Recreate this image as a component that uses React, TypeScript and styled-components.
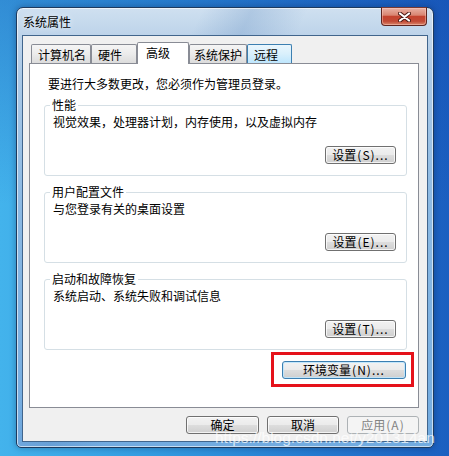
import React from "react";
import styled, { createGlobalStyle, css } from "styled-components";

const GlobalStyle = createGlobalStyle`
  html, body { margin: 0; padding: 0; }
  body {
    width: 449px;
    height: 456px;
    overflow: hidden;
    font-family: "Noto Sans CJK SC", "Noto Sans", sans-serif;
    -webkit-font-smoothing: antialiased;
  }
`;

const Desktop = styled.div`
  position: relative;
  width: 449px;
  height: 456px;
  box-sizing: border-box;
  padding: 7px 15px 0 16px;
  background:
    linear-gradient(180deg, rgba(18, 70, 170, 0.35) 0%, rgba(18, 70, 170, 0) 45%),
    linear-gradient(90deg, #43b3ec 0%, #329ae0 35%, #2478cf 72%, #1b5fc0 100%);
`;

const Window = styled.div`
  width: 418px;
  height: 441px;
  box-sizing: border-box;
  display: flex;
  flex-direction: column;
  padding: 0 5px 5px;
  border: 1px solid #1d3a5e;
  border-radius: 7px 7px 5px 5px;
  background:
    linear-gradient(115deg, rgba(255,255,255,0) 30%, rgba(70,120,180,0.22) 38%, rgba(255,255,255,0) 47%),
    linear-gradient(180deg, #cfe0f0 0px, #bed4ea 26px, #a9c8e6 70px, #8bb9e3 200px, #72abe0 100%);
  box-shadow: inset 0 0 0 1px rgba(255, 255, 255, 0.6), 0 0 6px rgba(0, 20, 60, 0.35);
`;

const TitleBar = styled.div`
  height: 27px;
  display: flex;
  align-items: center;
  justify-content: space-between;
  padding-left: 1px;
`;

const Title = styled.span`
  font-size: 12px;
  line-height: 16px;
  color: #000;
  text-shadow: 0 0 6px rgba(255, 255, 255, 0.9);
`;

const CloseButton = styled.div`
  align-self: flex-start;
  margin-top: -1px;
  margin-right: 1px;
  width: 46px;
  height: 19px;
  box-sizing: border-box;
  display: flex;
  align-items: center;
  justify-content: center;
  border: 1px solid #5e2520;
  border-top-color: #7a3a32;
  border-radius: 0 0 4px 4px;
  background: linear-gradient(180deg, #e9b1a4 0%, #d98572 42%, #c4432f 50%, #c24a36 78%, #d9876c 100%);
  box-shadow: inset 0 0 0 1px rgba(255, 210, 200, 0.45);
`;

const Client = styled.div`
  flex: 1;
  display: flex;
  flex-direction: column;
  box-sizing: border-box;
  padding: 6px 0 7px;
  background: #f0f0f0;
  border: 1px solid #41658c;
`;

const TabRow = styled.div`
  display: flex;
  align-items: flex-end;
  height: 21px;
  padding-left: 8px;
`;

const Tab = styled.div<{ $w: number; $pad: number; $active?: boolean; $hover?: boolean }>`
  position: relative;
  box-sizing: border-box;
  width: ${(p) => p.$w}px;
  height: ${(p) => (p.$active ? 22 : 19)}px;
  margin-bottom: ${(p) => (p.$active ? -1 : 0)}px;
  z-index: ${(p) => (p.$active ? 2 : 1)};
  padding: 2px 0 0 ${(p) => p.$pad}px;
  font-size: 12px;
  line-height: 16px;
  color: #000;
  white-space: nowrap;
  border: 1px solid #898c95;
  border-bottom: none;
  border-radius: 2px 2px 0 0;
  background: linear-gradient(180deg, #f5f5f5 0%, #ebebeb 50%, #dcdcdc 100%);
  ${(p) =>
    p.$hover &&
    css`
      border-color: #3c7fb1;
      background: linear-gradient(180deg, #eaf6fd 0%, #d9f0fc 50%, #bee6fd 100%);
    `}
  ${(p) =>
    p.$active &&
    css`
      background: #fff;
    `}
`;

const Panel = styled.div`
  height: 345px;
  box-sizing: border-box;
  margin: 0 8px 0 6px;
  padding: 12px 11px 0 14px;
  display: flex;
  flex-direction: column;
  background: #fff;
  border: 1px solid #898c95;
`;

const Intro = styled.div`
  margin-left: 4px;
  font-size: 12px;
  line-height: 16px;
  color: #000;
`;

const Groups = styled.div`
  display: flex;
  flex-direction: column;
  gap: 16px;
  margin-top: 13px;
`;

const GroupBox = styled.div`
  position: relative;
  height: 71px;
  box-sizing: border-box;
  display: flex;
  flex-direction: column;
  padding: 8px 10px 11px 8px;
  border: 1px solid #d5dfe5;
  border-radius: 3px;
`;

const GroupLabel = styled.span`
  position: absolute;
  top: -9px;
  left: 5px;
  padding: 0 2px;
  background: #fff;
  font-size: 12px;
  line-height: 16px;
  color: #000;
`;

const Desc = styled.div`
  font-size: 12px;
  line-height: 16px;
  color: #000;
`;

const ButtonRow = styled.div`
  display: flex;
  justify-content: flex-end;
  margin-top: 16px;
`;

const Highlight = styled.div`
  align-self: flex-end;
  margin-top: 2px;
  margin-right: -7px;
  padding: 6px 5px 5px 8px;
  border: 3px solid #e5121a;
  display: flex;
`;

const BottomRow = styled.div`
  display: flex;
  justify-content: flex-end;
  gap: 8px;
  margin-top: 8px;
  padding-right: 8px;
`;

const Button = styled.button<{ $w: number; $variant?: "default" | "disabled" }>`
  width: ${(p) => p.$w}px;
  height: 18px;
  box-sizing: border-box;
  padding: 0;
  display: flex;
  align-items: center;
  justify-content: center;
  font-family: "Noto Sans CJK SC", "Noto Sans", sans-serif;
  font-size: 12px;
  line-height: 16px;
  color: #000;
  border: 1px solid #707070;
  border-radius: 3px;
  background: linear-gradient(180deg, #f2f2f2 0%, #ebebeb 48%, #dddddd 52%, #cfcfcf 100%);
  box-shadow: inset 0 0 0 1px rgba(255, 255, 255, 0.75);
  ${(p) =>
    p.$variant === "default" &&
    css`
      border-color: #3c7fb1;
      box-shadow: inset 0 0 0 1px rgba(190, 230, 253, 0.9);
    `}
  ${(p) =>
    p.$variant === "disabled" &&
    css`
      color: #838383;
      border-color: #adb2b5;
      background: #f4f4f4;
      box-shadow: none;
    `}
`;

const Mnemonic = styled.span`
  margin-left: 1px;
  letter-spacing: 1px;
`;

const Watermark = styled.div`
  position: absolute;
  left: 215px;
  top: 429px;
  font-family: "Liberation Sans", Arial, sans-serif;
  font-size: 15.5px;
  line-height: 18px;
  color: rgba(255, 255, 255, 0.72);
  white-space: nowrap;
  pointer-events: none;
`;

const tabs = [
  { label: "计算机名", w: 60, pad: 6 },
  { label: "硬件", w: 46, pad: 6 },
  { label: "高级", w: 52, pad: 8, active: true },
  { label: "系统保护", w: 58, pad: 4 },
  { label: "远程", w: 45, pad: 6, hover: true },
];

const groups = [
  { title: "性能", desc: "视觉效果，处理器计划，内存使用，以及虚拟内存", key: "(S)..." },
  { title: "用户配置文件", desc: "与您登录有关的桌面设置", key: "(E)..." },
  { title: "启动和故障恢复", desc: "系统启动、系统失败和调试信息", key: "(T)..." },
];

export default function App() {
  return (
    <>
      <GlobalStyle />
      <Desktop>
        <Window>
          <TitleBar>
            <Title>系统属性</Title>
            <CloseButton>
              <svg width="13" height="10" viewBox="0 0 13 10">
                <path d="M2 1.5 L11 8.5 M11 1.5 L2 8.5" stroke="#4a1812" strokeWidth="4" strokeLinecap="round" />
                <path d="M2 1.5 L11 8.5 M11 1.5 L2 8.5" stroke="#ffffff" strokeWidth="2.2" strokeLinecap="round" />
              </svg>
            </CloseButton>
          </TitleBar>
          <Client>
            <TabRow>
              {tabs.map((t) => (
                <Tab key={t.label} $w={t.w} $pad={t.pad} $active={t.active} $hover={t.hover}>
                  {t.label}
                </Tab>
              ))}
            </TabRow>
            <Panel>
              <Intro>要进行大多数更改，您必须作为管理员登录。</Intro>
              <Groups>
                {groups.map((g) => (
                  <GroupBox key={g.title}>
                    <GroupLabel>{g.title}</GroupLabel>
                    <Desc>{g.desc}</Desc>
                    <ButtonRow>
                      <Button $w={71}>
                        设置<Mnemonic>{g.key}</Mnemonic>
                      </Button>
                    </ButtonRow>
                  </GroupBox>
                ))}
              </Groups>
              <Highlight>
                <Button $w={124} $variant="default">
                  环境变量<Mnemonic>(N)...</Mnemonic>
                </Button>
              </Highlight>
            </Panel>
            <BottomRow>
              <Button $w={73}>确定</Button>
              <Button $w={72}>取消</Button>
              <Button $w={72} $variant="disabled">
                应用<Mnemonic>(A)</Mnemonic>
              </Button>
            </BottomRow>
          </Client>
        </Window>
        <Watermark>https://blog.csdn.net/y201314an</Watermark>
      </Desktop>
    </>
  );
}
